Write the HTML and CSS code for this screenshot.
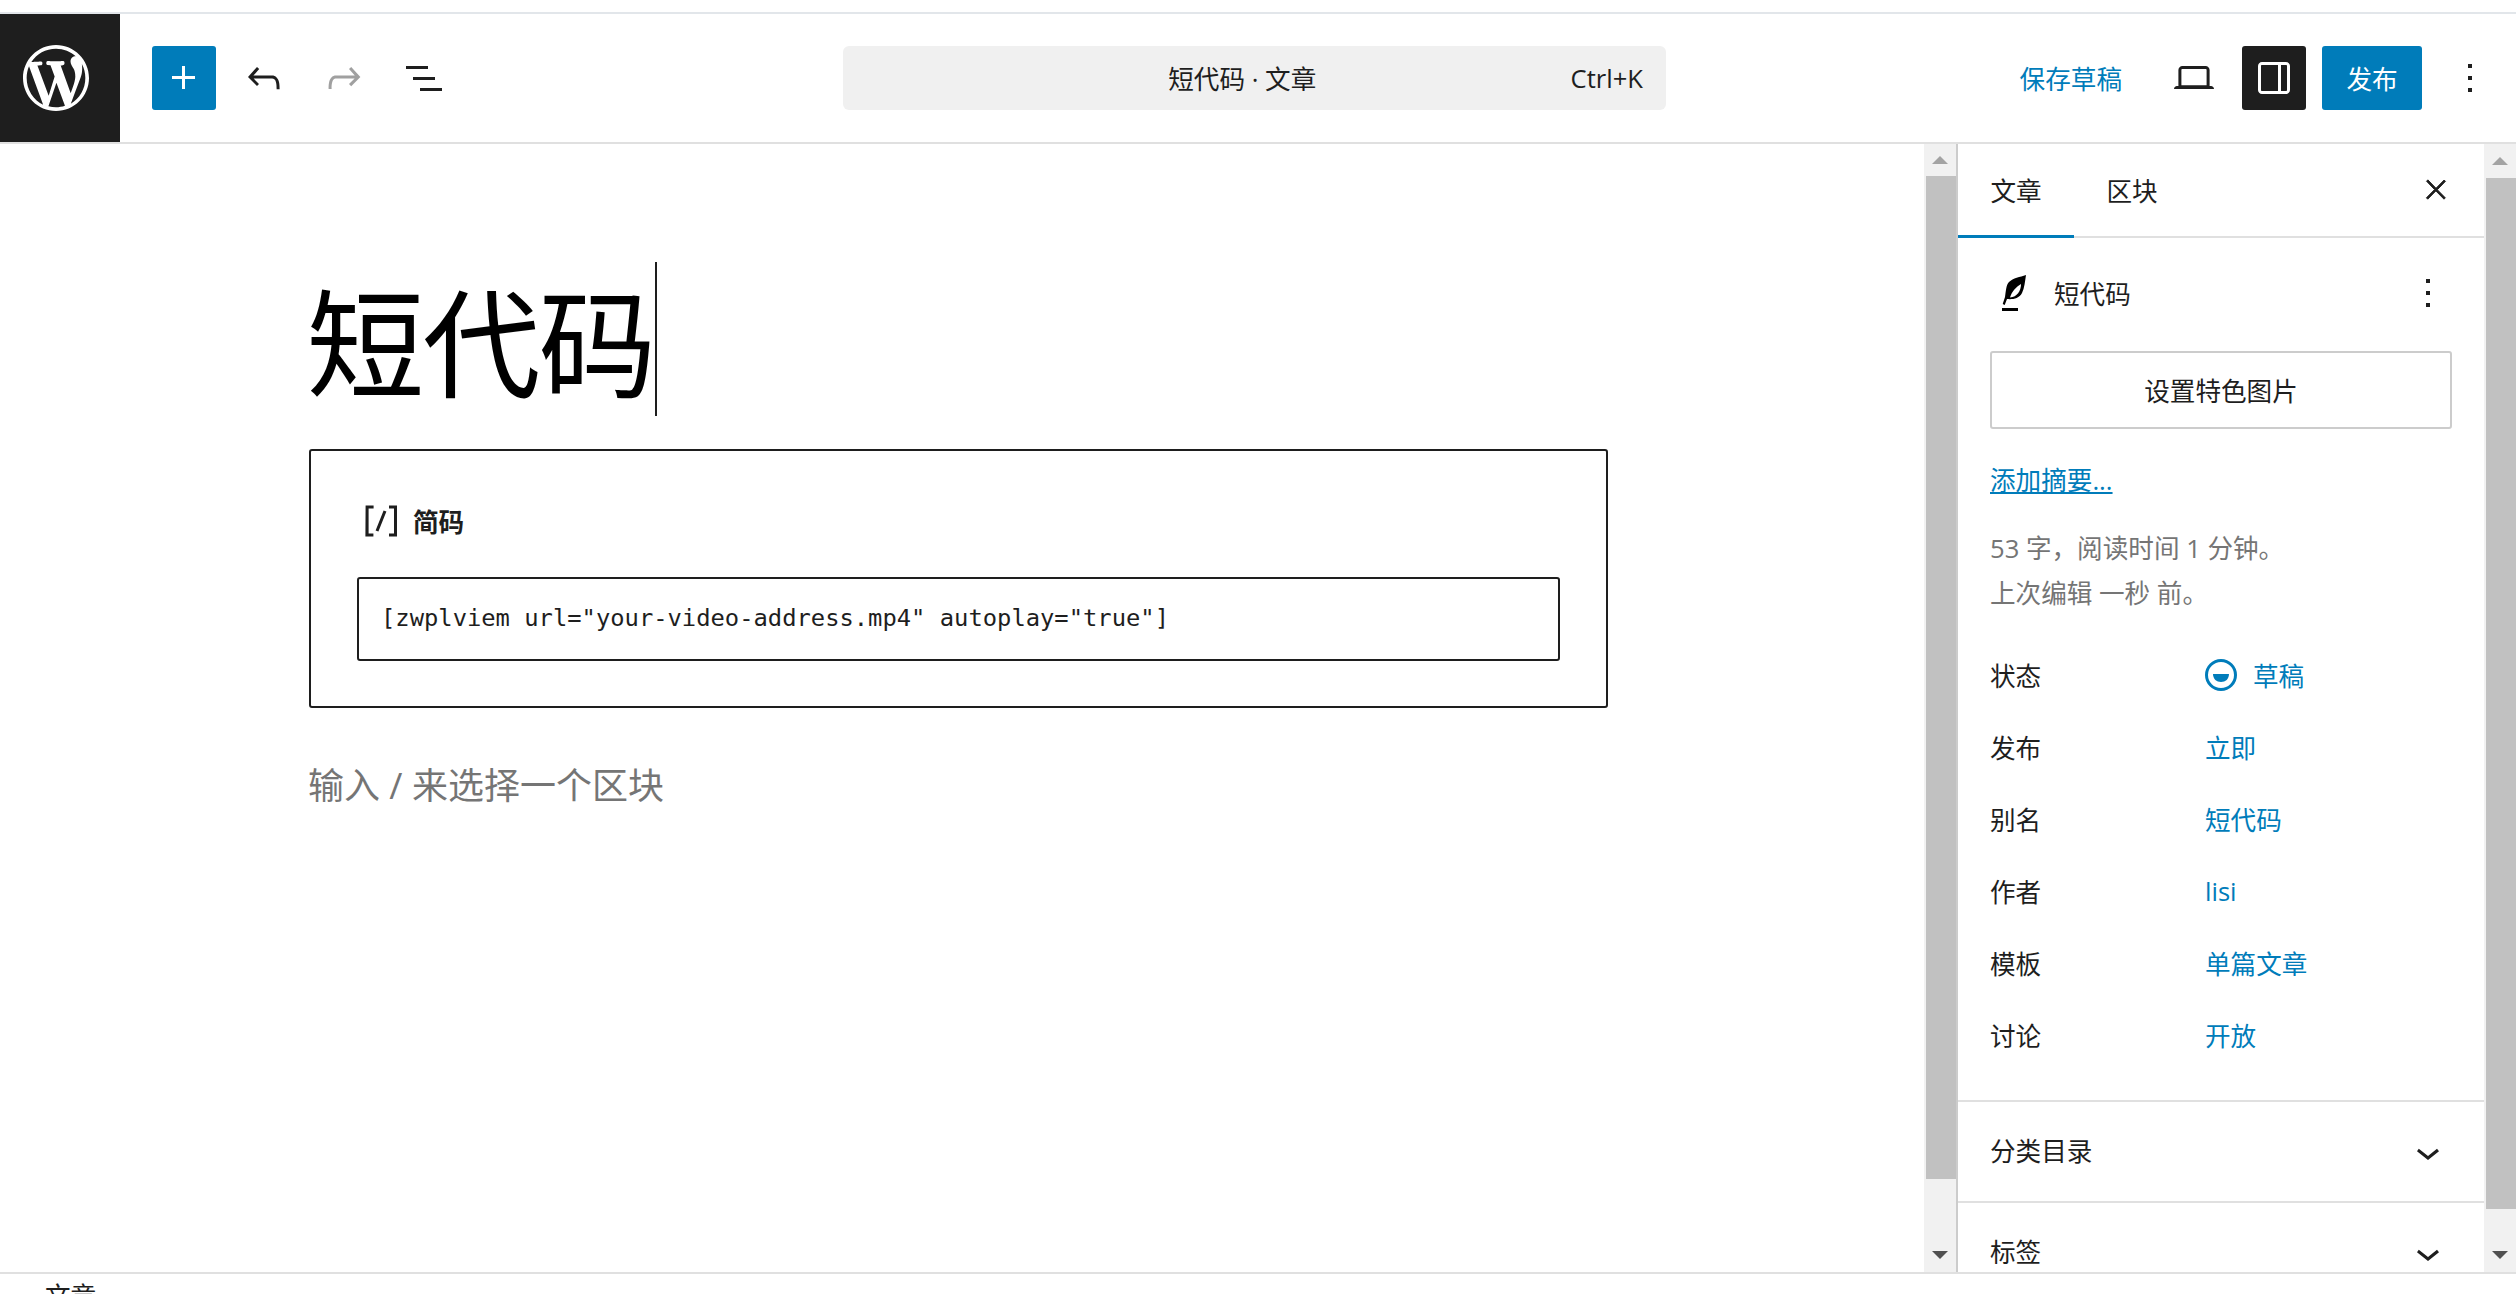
FILE: index.html
```html
<!DOCTYPE html>
<html lang="zh-CN">
<head>
<meta charset="utf-8">
<title>短代码 · 文章</title>
<link rel="stylesheet" href="styles.css">
</head>
<body>
<div class="top-gap"></div>
<header class="header">
  <a class="logo"><svg class="logo-svg" viewBox="0 0 20 20"><path fill="#fff" d="M20 10c0-5.51-4.49-10-10-10C4.48 0 0 4.49 0 10c0 5.52 4.48 10 10 10 5.51 0 10-4.48 10-10zM7.78 15.37L4.37 6.22c.55-.02 1.17-.08 1.17-.08.5-.06.44-1.13-.06-1.11 0 0-1.45.11-2.37.11-.18 0-.37 0-.58-.01C4.12 2.69 6.87 1.11 10 1.11c2.33 0 4.45.87 6.05 2.34-.68-.11-1.65.39-1.65 1.58 0 .74.45 1.36.9 2.1.35.61.55 1.36.55 2.46 0 1.49-1.4 5-1.4 5l-3.03-8.37c.54-.02.82-.17.82-.17.5-.05.44-1.25-.06-1.22 0 0-1.44.12-2.38.12-.87 0-2.33-.12-2.33-.12-.5-.03-.56 1.2-.06 1.22l.92.08 1.26 3.41zM17.41 10c.24-.64.74-1.87.43-4.25.7 1.29 1.05 2.71 1.05 4.25 0 3.29-1.73 6.24-4.4 7.78.97-2.59 1.94-5.2 2.92-7.78zM6.1 18.09C3.12 16.65 1.11 13.53 1.11 10c0-1.3.23-2.48.72-3.59C3.25 10.3 4.67 14.2 6.1 18.09zm4.03-6.63l2.58 6.98c-.86.29-1.76.45-2.71.45-.79 0-1.57-.11-2.29-.33.81-2.38 1.62-4.74 2.42-7.1z"/></svg></a>
  <div class="tools">
    <button class="icon-btn primary"><svg class="icon" viewBox="0 0 24 24"><path fill="#fff" d="M11 12.5V17.5H12.5V12.5H17.5V11H12.5V6H11V11H6V12.5H11Z"/></svg></button>
    <button class="icon-btn"><svg class="icon" viewBox="0 0 24 24"><path d="M18.3 11.7c-.6-.6-1.4-.9-2.3-.9H6.7l2.9-3.3-1.1-1-4.5 5L8.5 16l1-1-2.7-2.7H16c.5 0 .9.2 1.3.5 1 1 1 3.4 1 4.5v.3h1.5v-.2c0-1.5 0-4.3-1.5-5.7z"/></svg></button>
    <button class="icon-btn disabled"><svg class="icon" viewBox="0 0 24 24"><path d="M15.6 6.5l-1.1 1 2.9 3.3H8c-.9 0-1.7.3-2.3.9-1.4 1.5-1.4 4.2-1.4 5.6v.2h1.5v-.3c0-1.1 0-3.5 1-4.5.3-.3.7-.5 1.3-.5h9.2L14.5 15l1.1 1.1 4.6-4.6-4.6-5z"/></svg></button>
    <button class="icon-btn"><svg class="icon" viewBox="0 0 24 24"><path d="M3 6h11v1.5H3V6zm3.5 5.5h11V13h-11v-1.5zM21 17H10v1.5h11V17z"/></svg></button>
  </div>
  <div class="command-bar"><span class="command-title">短代码 · 文章</span><span class="command-key">Ctrl+K</span></div>
  <div class="actions">
    <button class="text-btn">保存草稿</button>
    <button class="icon-btn"><svg class="icon" viewBox="0 0 24 24"><path d="M20.5 16h-.7V8c0-1.1-.9-2-2-2H6.2c-1.1 0-2 .9-2 2v8h-.7c-.8 0-1.5.7-1.5 1.5h20c0-.8-.7-1.5-1.5-1.5zM5.7 8c0-.3.2-.5.5-.5h11.6c.3 0 .5.2.5.5v7.6H5.7V8z"/></svg></button>
    <button class="icon-btn dark"><svg class="icon" viewBox="0 0 24 24"><path fill="#fff" d="M18 4H6c-1.1 0-2 .9-2 2v12c0 1.1.9 2 2 2h12c1.1 0 2-.9 2-2V6c0-1.1-.9-2-2-2zm-4 14.5H6c-.3 0-.5-.2-.5-.5V6c0-.3.2-.5.5-.5h8v13zm4.5-.5c0 .3-.2.5-.5.5h-2.5v-13H18c.3 0 .5.2.5.5v12z"/></svg></button>
    <button class="publish">发布</button>
    <button class="icon-btn"><svg class="icon" viewBox="0 0 24 24"><path d="M13 19h-2v-2h2v2zm0-6h-2v-2h2v2zm0-6h-2V5h2v2z"/></svg></button>
  </div>
</header>
<main class="main">
  <section class="editor">
    <h1 class="post-title"><span class="title-text">短代码</span></h1>
    <div class="block">
      <div class="block-label"><svg class="icon" viewBox="0 0 24 24"><path d="M16 4.2v1.5h2.5v12.5H16v1.5h4V4.2h-4zM4.2 19.8h4v-1.5H5.8V5.8h2.5V4.2h-4l-.1 15.6zm5.1-3.1l1.4.6 4-10-1.4-.6-4 10z"/></svg><span class="block-name">简码</span></div>
      <div class="shortcode-input">[zwplviem url="your-video-address.mp4" autoplay="true"]</div>
    </div>
    <p class="placeholder">输入 / 来选择一个区块</p>
  </section>
  <div class="scrollbar left-bar">
    <div class="sb-btn"><i class="arrow-up"></i></div>
    <div class="thumb left-thumb"></div>
    <div class="sb-btn end"><i class="arrow-down"></i></div>
  </div>
  <aside class="sidebar">
    <div class="tabs">
      <button class="tab active">文章</button>
      <button class="tab">区块</button>
      <button class="close"><svg class="close-icon" viewBox="0 0 24 24"><path d="M13 11.8l6.1-6.3-1-1-6.1 6.2-6.1-6.3-1 1 6 6.3-6.1 6.2 1 1 6.1-6.2 6.1 6.2 1-1z"/></svg></button>
    </div>
    <div class="panel">
      <div class="post-head">
        <svg class="feather" viewBox="0 0 24 36"><path d="M24 0C18 2 11 3 7 7 4 10 4 16 3 22L.7 29l2 1L5 24c5 .5 12 0 15-6 2.500-5 3-12 4-18z"/><path fill="#fff" d="M8 22.500C10 16 14 12 19 9c0 7-4 13-11 13.500z"/><path d="M0 33h16v3H0z"/></svg>
        <span class="post-name">短代码</span>
        <svg class="icon more" viewBox="0 0 24 24"><path d="M13 19h-2v-2h2v2zm0-6h-2v-2h2v2zm0-6h-2V5h2v2z"/></svg>
      </div>
      <button class="featured">设置特色图片</button>
      <a class="excerpt">添加摘要...</a>
      <p class="stats">53 字，阅读时间 1 分钟。<br>上次编辑 一秒 前。</p>
      <div class="meta">
        <span class="meta-label">状态</span><span class="meta-value"><svg class="draft" viewBox="0 0 32 32"><circle cx="16" cy="16" r="14.500" fill="none" stroke="#007cba" stroke-width="3"/><path fill="#007cba" d="M8 15h16c0 5-3.500 8-8 8s-8-3-8-8z"/></svg>草稿</span>
        <span class="meta-label">发布</span><span class="meta-value">立即</span>
        <span class="meta-label">别名</span><span class="meta-value">短代码</span>
        <span class="meta-label">作者</span><span class="meta-value">lisi</span>
        <span class="meta-label">模板</span><span class="meta-value">单篇文章</span>
        <span class="meta-label">讨论</span><span class="meta-value">开放</span>
      </div>
    </div>
    <div class="section"><span class="section-name">分类目录</span><svg class="icon" viewBox="0 0 24 24"><path d="M17.500 11.600L12 16l-5.500-4.400.9-1.200L12 14l4.500-3.600 1 1.200z"/></svg></div>
    <div class="section"><span class="section-name">标签</span><svg class="icon" viewBox="0 0 24 24"><path d="M17.500 11.600L12 16l-5.500-4.400.9-1.200L12 14l4.500-3.600 1 1.200z"/></svg></div>
  </aside>
  <div class="scrollbar right-bar">
    <div class="sb-btn tall"><i class="arrow-up"></i></div>
    <div class="thumb right-thumb"></div>
    <div class="sb-btn end"><i class="arrow-down"></i></div>
  </div>
</main>
<footer class="footer">文章</footer>
</body>
</html>
```
FILE: styles.css
```css
* { box-sizing: border-box; }
html, body { margin: 0; height: 100%; }
body {
  height: 1294px;
  overflow: hidden;
  background: #fff;
  color: #1e1e1e;
  font-family: "Open Sans", "Noto Sans CJK SC", sans-serif;
  font-size: 25.6px;
  display: flex;
  flex-direction: column;
}
button { font: inherit; color: inherit; background: none; border: 0; padding: 0; margin: 0; }
svg { display: block; flex: none; }
.top-gap { height: 14px; border-bottom: 2px solid #e2e6ea; flex: none; }

.header { height: 130px; flex: none; display: flex; align-items: center; border-bottom: 2px solid #e0e0e0; }
.logo { width: 120px; height: 128px; background: #1e1e1e; display: flex; align-items: center; padding-left: 23px; flex: none; }
.logo-svg { width: 66px; height: 66px; }
.tools { display: flex; gap: 16px; margin-left: 32px; }
.icon-btn { width: 64px; height: 64px; border-radius: 3px; display: flex; align-items: center; justify-content: center; flex: none; }
.icon { width: 48px; height: 48px; fill: #1e1e1e; }
.primary { background: #007cba; }
.dark { background: #1e1e1e; }
.disabled .icon { fill: #a0a0a0; }
.command-bar { width: 823px; height: 64px; margin-left: 387px; padding: 0 23px 0 71px; background: #f0f0f0; border-radius: 6px; display: flex; align-items: center; flex: none; }
.command-title { flex: 1; text-align: center; }
.command-key { font-size: 25.6px; }
.actions { margin-left: auto; padding-right: 14px; display: flex; gap: 16px; align-items: center; }
.text-btn { color: #007cba; height: 64px; padding: 0 24px; }
.publish { width: 100px; height: 64px; background: #007cba; color: #fff; border-radius: 3px; }

.main { height: 1128px; flex: none; display: flex; overflow: hidden; }
.editor { flex: 1; min-width: 0; padding-left: 308px; }
.post-title { display: flex; margin: 118px 0 0 -1.5px; height: 154px; font-size: 118px; font-weight: 400; color: #000; }
.title-text { height: 154px; line-height: 164px; letter-spacing: -2px; border-right: 2px solid #1e1e1e; }
.block { margin: 33px 0 0 1px; width: 1299px; height: 259px; border: 2px solid #1e1e1e; border-radius: 3px; padding: 46px; }
.block-label { display: flex; align-items: center; height: 48px; gap: 8px; font-weight: 700; }
.block-name { font-size: 25.6px; }
.shortcode-input { margin-top: 32px; height: 84px; border: 2px solid #1e1e1e; border-radius: 3px; padding-left: 22px; font-family: "DejaVu Sans Mono", monospace; font-size: 23.8px; line-height: 78px; white-space: nowrap; }
.placeholder { margin: 53px 0 0; font-size: 36px; line-height: 50px; color: #757575; }

.scrollbar { width: 32px; flex: none; background: #f1f1f1; display: flex; flex-direction: column; }
.sb-btn { height: 32px; display: flex; align-items: center; justify-content: center; flex: none; }
.sb-btn.tall { height: 34px; }
.sb-btn.end { margin-top: auto; height: 34px; }
.thumb { background: #c1c1c1; margin-left: 2px; flex: none; }
.left-thumb { height: 1003px; }
.right-thumb { height: 1031px; }
.arrow-up, .arrow-down { display: block; width: 0; height: 0; border-left: 8px solid transparent; border-right: 8px solid transparent; }
.arrow-up { border-bottom: 8px solid #a3a3a3; }
.arrow-down { border-top: 8px solid #505050; }

.sidebar { width: 528px; flex: none; border-left: 2px solid #ccc; overflow: hidden; }
.tabs { height: 94px; border-bottom: 2px solid #e0e0e0; display: flex; align-items: stretch; }
.tab { width: 116px; height: 94px; text-align: center; padding: 0 0 3px; }
.tab.active { box-shadow: inset 0 -3px 0 #007cba; }
.close { margin-left: auto; margin-right: 32px; display: flex; align-items: center; }
.close-icon { width: 32px; height: 32px; fill: #1e1e1e; stroke: #1e1e1e; stroke-width: .7; }

.panel { padding: 32px 32px 28px; height: 864px; border-bottom: 2px solid #e0e0e0; }
.post-head { height: 46px; display: flex; align-items: center; padding-left: 12px; }
.feather { width: 24px; height: 36px; fill: #000; }
.post-name { margin-left: 28px; }
.more { margin-left: auto; }
.featured { display: block; width: 100%; height: 78px; margin-top: 35px; border: 2px solid #ccc; border-radius: 3px; background: #fff; }
.excerpt { display: block; margin-top: 32px; line-height: 40px; color: #007cba; text-decoration: underline; }
.stats { margin: 25px 0 0; line-height: 45px; color: #757575; }
.meta { margin-top: 23px; display: grid; grid-template-columns: 215px 1fr; grid-auto-rows: 72px; align-items: center; }
.meta-value { color: #007cba; display: flex; align-items: center; }
.draft { width: 32px; height: 32px; margin-right: 16px; }

.section { height: 101px; padding: 0 32px; display: flex; align-items: center; justify-content: space-between; border-bottom: 2px solid #e0e0e0; flex: none; }
.section-name { margin-bottom: 3px; }

.footer { flex: 1; border-top: 2px solid #e0e0e0; padding: 3px 0 0 45px; line-height: 40px; overflow: hidden; }
```
